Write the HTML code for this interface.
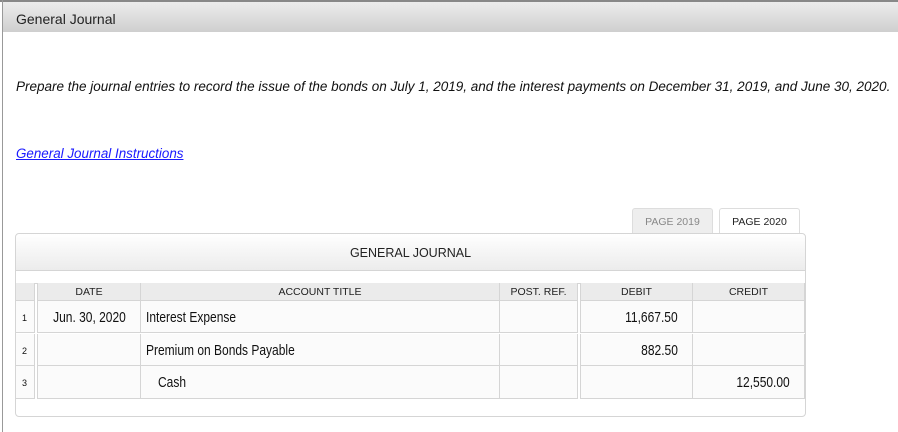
<!DOCTYPE html>
<html><head><style>
*{margin:0;padding:0;box-sizing:border-box}
body{width:898px;height:432px;background:#fff;font-family:"Liberation Sans",sans-serif;position:relative;overflow:hidden}
.top{position:absolute;left:0;top:0;width:898px;height:2px;background:#888}
.lb{position:absolute;left:2px;top:0;width:1px;height:432px;background:#999}
.hdr{position:absolute;left:3px;top:2px;width:895px;height:30px;background:linear-gradient(#ececec,#cfcfcf);font-size:14px;color:#222;padding:9px 0 0 13px}
.p{position:absolute;left:16px;top:79px;font-size:13.5px;font-style:italic;color:#111;white-space:nowrap}
.a{position:absolute;left:16px;top:146px;font-size:13.4px;font-style:italic;color:#1a1aff;text-decoration:underline}
.tab{position:absolute;top:208px;height:26px;width:81px;border:1px solid #ddd;border-bottom:none;border-radius:3px 3px 0 0;font-size:10.5px;text-align:center;padding-top:7px}
.box{position:absolute;left:15px;top:233px;width:791px;height:184px;border:1px solid #d5d5d5;border-radius:4px;background:#fff}
.title{position:absolute;left:0;top:0;width:789px;height:37px;background:linear-gradient(#fff,#ececec);border-bottom:1px solid #d5d5d5;font-size:12.5px;text-align:center;padding-top:12px;color:#222;border-radius:4px 4px 0 0}
.c{position:absolute;border-right:1px solid #d5d5d5;border-bottom:1px solid #d5d5d5;background:#fbfbfb;font-size:15px;color:#111;white-space:nowrap}
.h{background:#ebebeb;font-size:10.5px;text-align:center;padding-top:3px;color:#222}
.s{display:inline-block;transform:scaleX(.8);transform-origin:left}
.r{text-align:right}.r .s{transform-origin:right}
.m{text-align:center}.m .s{transform-origin:center}
</style></head><body>
<div class="top"></div><div class="lb"></div>
<div class="hdr">General Journal</div>
<div class="p">Prepare the journal entries to record the issue of the bonds on July 1, 2019, and the interest payments on December 31, 2019, and June 30, 2020.</div>
<div class="a">General Journal Instructions</div>
<div class="tab" style="left:632px;background:#eee;color:#888">PAGE 2019</div>
<div class="tab" style="left:719px;background:#fff;color:#222">PAGE 2020</div>
<div class="box">
<div class="title">GENERAL JOURNAL</div>
<div style="position:absolute;left:0;top:49px;width:789px;height:1px;background:#d5d5d5"></div>
</div>
<div>
<div class="c h" style="left:16px;top:283px;width:19px;height:18px"></div>
<div class="c h" style="left:37px;top:283px;width:104px;height:18px;border-left:1px solid #d5d5d5">DATE</div>
<div class="c h" style="left:141px;top:283px;width:359px;height:18px">ACCOUNT TITLE</div>
<div class="c h" style="left:500px;top:283px;width:78px;height:18px">POST. REF.</div>
<div class="c h" style="left:580px;top:283px;width:113px;height:18px;border-left:1px solid #d5d5d5">DEBIT</div>
<div class="c h" style="left:693px;top:283px;width:112px;height:18px">CREDIT</div>

<div class="c" style="left:16px;top:301px;width:19px;height:32px;font-size:9px;padding:12px 0 0 6px">1</div>
<div class="c m" style="left:37px;top:301px;width:104px;height:32px;border-left:1px solid #d5d5d5;padding-top:8px"><span class="s">Jun. 30, 2020</span></div>
<div class="c" style="left:141px;top:301px;width:359px;height:32px;padding:8px 0 0 5px"><span class="s">Interest Expense</span></div>
<div class="c" style="left:500px;top:301px;width:78px;height:32px"></div>
<div class="c r" style="left:580px;top:301px;width:113px;height:32px;border-left:1px solid #d5d5d5;padding:8px 14px 0 0"><span class="s">11,667.50</span></div>
<div class="c" style="left:693px;top:301px;width:112px;height:32px"></div>

<div class="c" style="left:16px;top:334px;width:19px;height:32px;font-size:9px;padding:12px 0 0 6px">2</div>
<div class="c" style="left:37px;top:334px;width:104px;height:32px;border-left:1px solid #d5d5d5"></div>
<div class="c" style="left:141px;top:334px;width:359px;height:32px;padding:8px 0 0 5px"><span class="s">Premium on Bonds Payable</span></div>
<div class="c" style="left:500px;top:334px;width:78px;height:32px"></div>
<div class="c r" style="left:580px;top:334px;width:113px;height:32px;border-left:1px solid #d5d5d5;padding:8px 14px 0 0"><span class="s">882.50</span></div>
<div class="c" style="left:693px;top:334px;width:112px;height:32px"></div>

<div class="c" style="left:16px;top:366px;width:19px;height:33px;font-size:9px;padding:12px 0 0 6px">3</div>
<div class="c" style="left:37px;top:366px;width:104px;height:33px;border-left:1px solid #d5d5d5"></div>
<div class="c" style="left:141px;top:366px;width:359px;height:33px;padding:8px 0 0 17px"><span class="s">Cash</span></div>
<div class="c" style="left:500px;top:366px;width:78px;height:33px"></div>
<div class="c" style="left:580px;top:366px;width:113px;height:33px;border-left:1px solid #d5d5d5"></div>
<div class="c r" style="left:693px;top:366px;width:112px;height:33px;padding:8px 14px 0 0"><span class="s">12,550.00</span></div>
</div>
</body></html>
